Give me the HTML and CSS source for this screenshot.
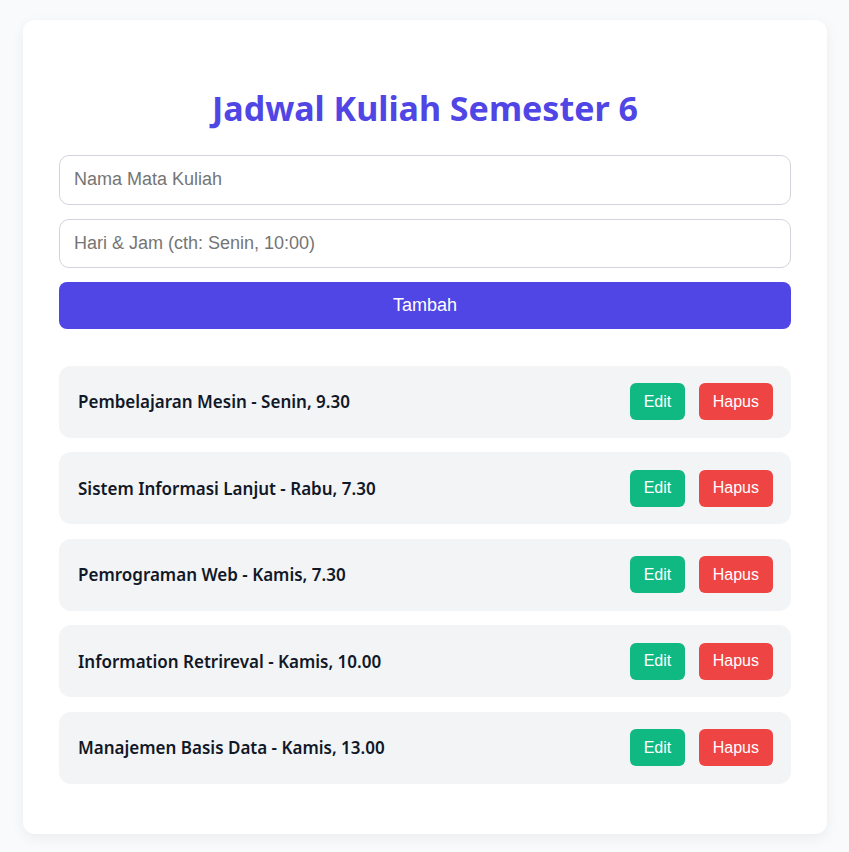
FILE: index.html
```html
<!DOCTYPE html>
<html lang="id">
<head>
<meta charset="utf-8">
<title>Jadwal Kuliah</title>
<link rel="stylesheet" href="styles.css">
</head>
<body>
<main class="card">
  <h1 class="title">Jadwal Kuliah Semester 6</h1>
  <form class="form">
    <input class="field" type="text" placeholder="Nama Mata Kuliah">
    <input class="field" type="text" placeholder="Hari &amp; Jam (cth: Senin, 10:00)">
    <button class="add" type="button">Tambah</button>
  </form>
  <ul class="list">
    <li class="item"><span class="item-text">Pembelajaran Mesin - Senin, 9.30</span><div class="actions"><button class="btn edit" type="button">Edit</button><button class="btn del" type="button">Hapus</button></div></li>
    <li class="item"><span class="item-text">Sistem Informasi Lanjut - Rabu, 7.30</span><div class="actions"><button class="btn edit" type="button">Edit</button><button class="btn del" type="button">Hapus</button></div></li>
    <li class="item"><span class="item-text">Pemrograman Web - Kamis, 7.30</span><div class="actions"><button class="btn edit" type="button">Edit</button><button class="btn del" type="button">Hapus</button></div></li>
    <li class="item"><span class="item-text">Information Retrireval - Kamis, 10.00</span><div class="actions"><button class="btn edit" type="button">Edit</button><button class="btn del" type="button">Hapus</button></div></li>
    <li class="item"><span class="item-text">Manajemen Basis Data - Kamis, 13.00</span><div class="actions"><button class="btn edit" type="button">Edit</button><button class="btn del" type="button">Hapus</button></div></li>
  </ul>
</main>
</body>
</html>
```
FILE: styles.css
```css
* { box-sizing: border-box; }
html, body { margin: 0; padding: 0; }
body {
  background: #f9fafb;
  font-family: "Noto Sans", "Open Sans", sans-serif;
  padding: 20px 22px 18px 23px;
}
.card {
  background: #ffffff;
  border-radius: 12px;
  box-shadow: 0 4px 14px rgba(0, 0, 0, 0.06);
  padding: 68px 36px 36px 36px;
  height: 814px;
}
.title {
  margin: 0 0 27px 0;
  text-align: center;
  font-size: 34px;
  line-height: 40px;
  font-weight: 700;
  color: #4f46e5;
}
.form {
  display: flex;
  flex-direction: column;
  gap: 14px;
  margin: 0 0 36.5px 0;
}
.field {
  height: 49.5px;
  border: 1px solid #d1d5db;
  border-radius: 10px;
  padding: 0 14px;
  font-family: "Liberation Sans", Arial, sans-serif;
  font-size: 18px;
  color: #111827;
  background: #fff;
}
.field::placeholder { color: #757575; }
.add {
  height: 47px;
  border: none;
  border-radius: 8px;
  background: #4f46e5;
  color: #fff;
  font-family: "Liberation Sans", Arial, sans-serif;
  font-size: 18px;
}
.list {
  list-style: none;
  margin: 0;
  padding: 0;
  display: flex;
  flex-direction: column;
  gap: 14.5px;
}
.item {
  height: 72px;
  background: #f3f4f6;
  border-radius: 12px;
  display: flex;
  align-items: center;
  justify-content: space-between;
  padding: 0 18px 0 19px;
}
.item-text {
  font-size: 17px;
  font-weight: 600;
  color: #111827;
}
.actions {
  display: flex;
  gap: 14px;
}
.btn {
  height: 37px;
  border: none;
  border-radius: 6px;
  padding: 0 13.5px;
  color: #fff;
  font-family: "Liberation Sans", Arial, sans-serif;
  font-size: 16px;
}
.edit { background: #10b981; }
.del { background: #ef4444; padding: 0 14px; }
```
